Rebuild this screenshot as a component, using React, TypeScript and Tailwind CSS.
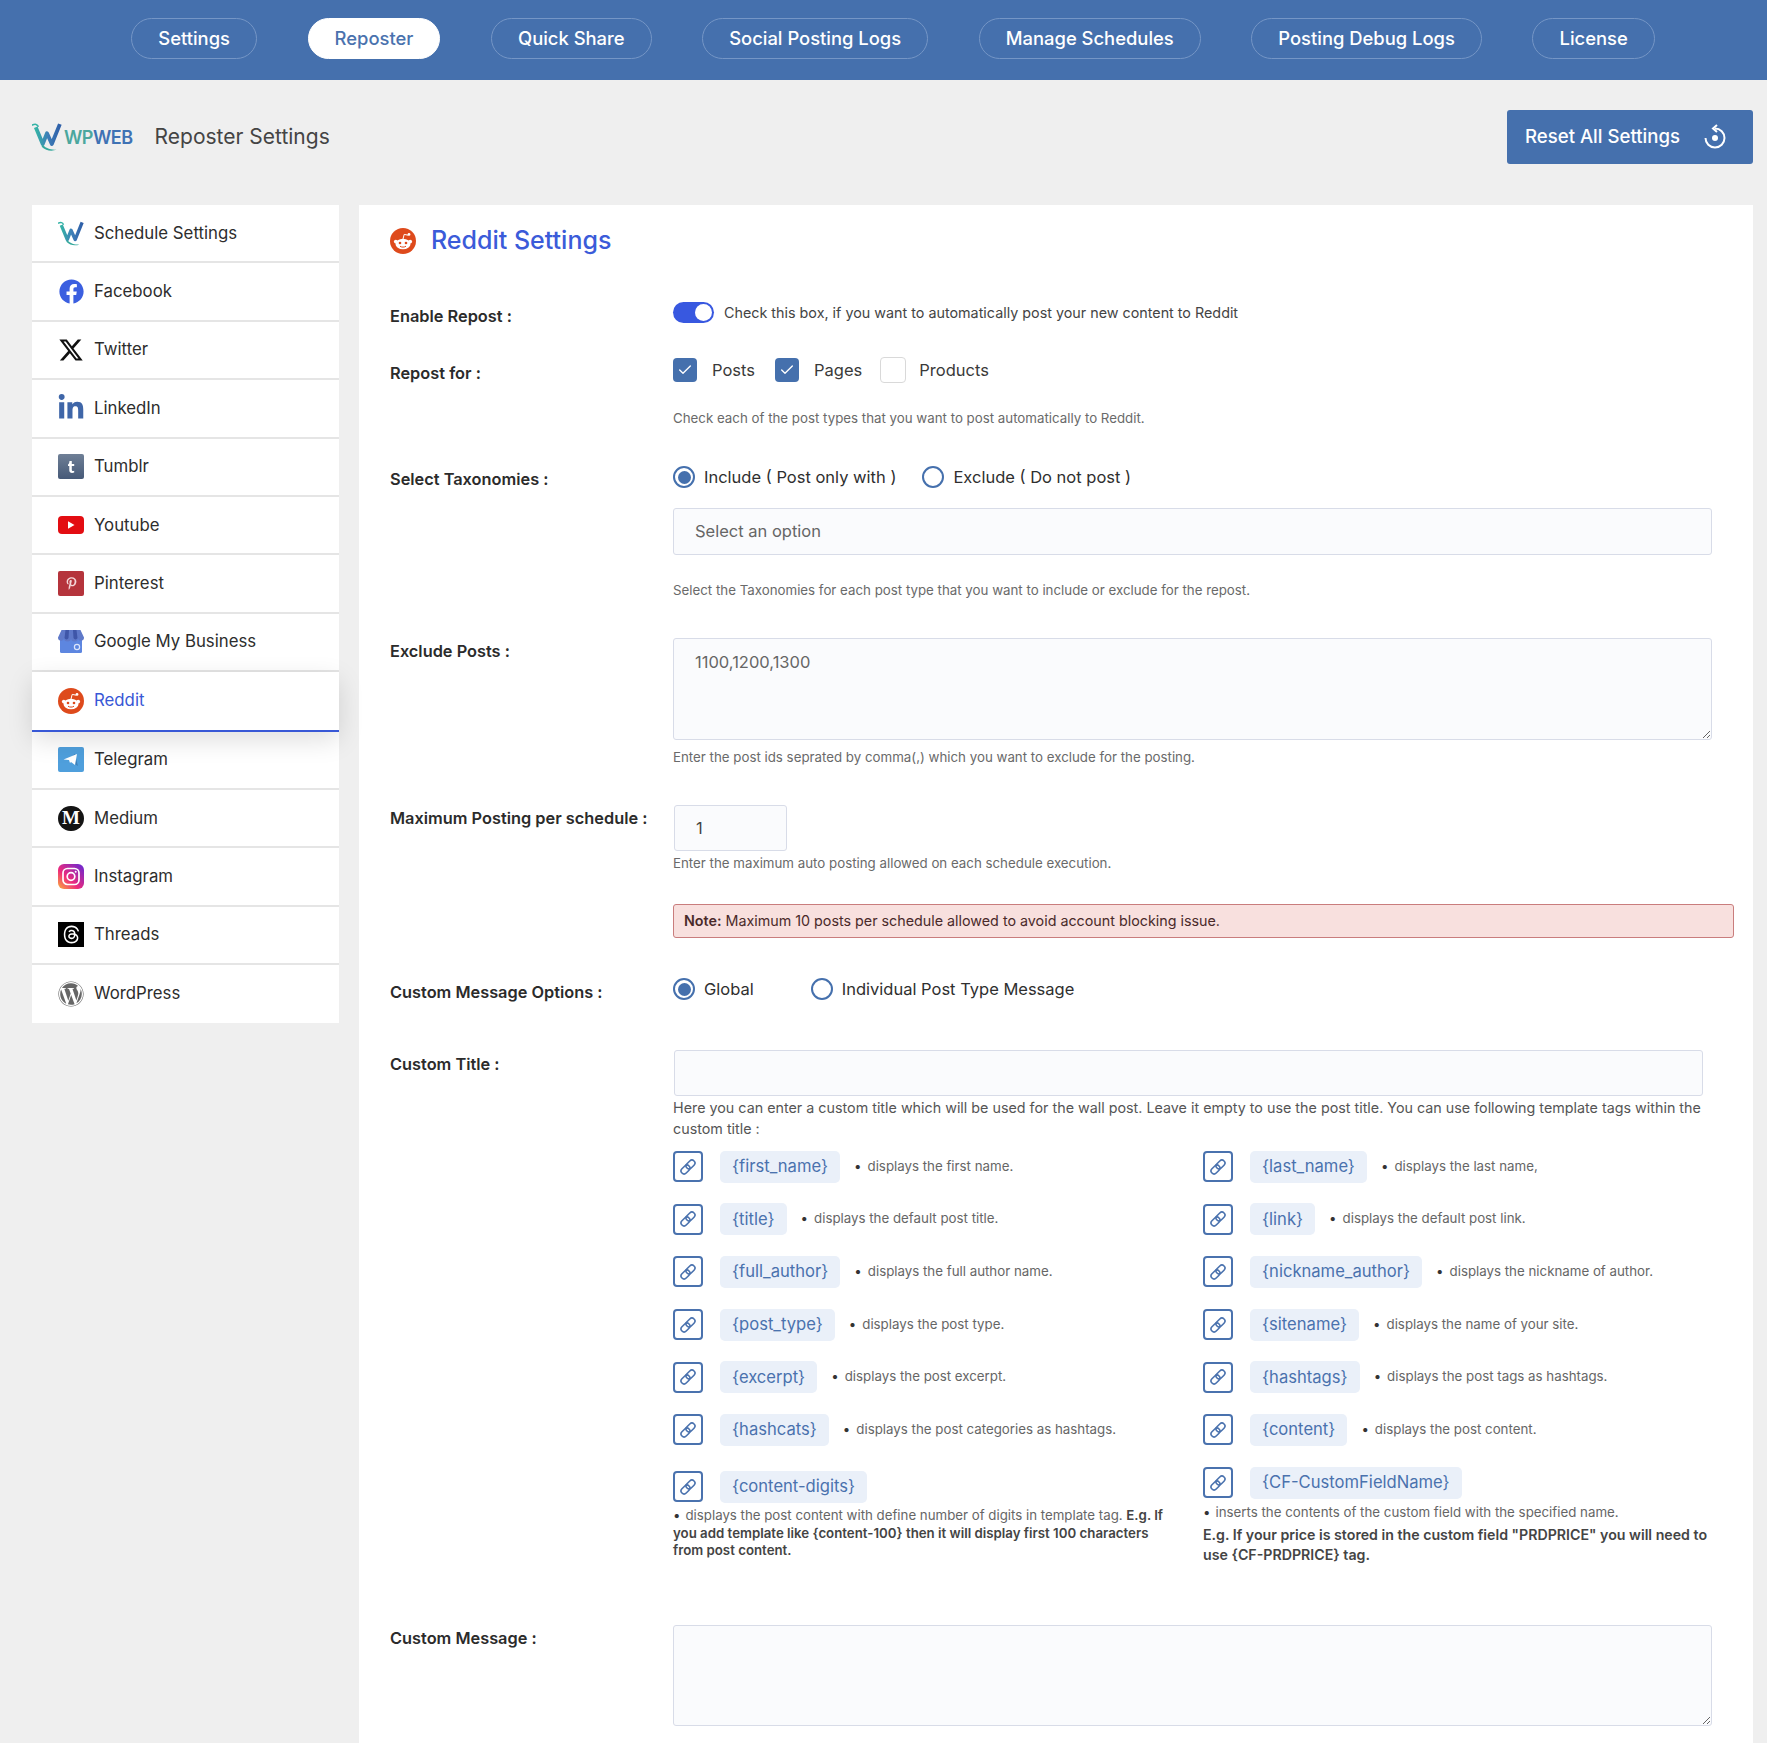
import { Check } from "lucide-react";
import type { ReactNode } from "react";
import { FaFacebook, FaLinkedinIn, FaPinterestP, FaWordpress } from "react-icons/fa";
import { FaThreads, FaXTwitter } from "react-icons/fa6";

const navItems = [
  "Settings",
  "Reposter",
  "Quick Share",
  "Social Posting Logs",
  "Manage Schedules",
  "Posting Debug Logs",
  "License",
];

function WIcon({ size = 30, id }: { size?: number; id: string }) {
  return (
    <svg width={size} height={size} viewBox="0 0 28 28" fill="none">
      <defs>
        <linearGradient id={id} x1="0" y1="0" x2="1" y2="0">
          <stop offset="0" stopColor="#35b3a6" />
          <stop offset="0.5" stopColor="#3d7fb8" />
          <stop offset="1" stopColor="#2f5fa8" />
        </linearGradient>
      </defs>
      <path d="M0 3c3-1.500 5-1 6 1.500" stroke="#35b3a6" strokeWidth="1.500" />
      <path d="M3.500 5l6.500 15.500 4-10 4.500 10L26 2" stroke={`url(#${id})`} strokeWidth="3.600" strokeLinejoin="round" />
      <path d="M10 21c3 4 8 5 13 5-5 1.500-10 1-14-3z" fill="#35a89c" />
    </svg>
  );
}

function RedditIcon({ size = 26 }: { size?: number }) {
  return (
    <svg width={size} height={size} viewBox="0 0 26 26">
      <circle cx="13" cy="13" r="13" fill="#de4a1c" />
      <ellipse cx="13" cy="16" rx="7.500" ry="5.200" fill="#fff" />
      <circle cx="5.800" cy="13.600" r="1.900" fill="#fff" />
      <circle cx="20.200" cy="13.600" r="1.900" fill="#fff" />
      <circle cx="19" cy="6.400" r="1.400" fill="#fff" />
      <path d="M13 11l1.200-4.600 4 .8" stroke="#fff" strokeWidth="1" fill="none" />
      <circle cx="10" cy="15" r="1.300" fill="#de4a1c" />
      <circle cx="16" cy="15" r="1.300" fill="#de4a1c" />
      <path d="M10 18.200c1.600 1.200 4.400 1.200 6 0" stroke="#de4a1c" strokeWidth="1" fill="none" />
    </svg>
  );
}

function TumblrIcon() {
  return (
    <svg width="26" height="25" viewBox="0 0 26 25">
      <defs>
        <linearGradient id="tumblr" x1="0" y1="0" x2="0" y2="1">
          <stop offset="0" stopColor="#6f7f96" />
          <stop offset="1" stopColor="#465a78" />
        </linearGradient>
      </defs>
      <rect width="26" height="25" rx="2" fill="url(#tumblr)" />
      <path d="M11.500 7h2.300v3h2.400v2h-2.400v4c0 1 .8 1.200 2.400.8v1.800c-3 1-4.900 0-4.900-2.300V12H10v-1.600c1-.3 1.300-1.500 1.500-3.400z" fill="#fff" />
    </svg>
  );
}

function YoutubeIcon() {
  return (
    <svg width="26" height="18" viewBox="0 0 26 18">
      <rect width="26" height="18" rx="4" fill="#e30d12" />
      <path d="M10 5.200l6.500 3.800-6.500 3.800z" fill="#fff" />
    </svg>
  );
}

function BusinessIcon() {
  return (
    <svg width="26" height="23" viewBox="0 0 26 23">
      <rect x="2" y="7" width="22" height="16" rx="1.500" fill="#5d86e0" />
      <path d="M3.500 0h19L26 7.500a3 3 0 0 1-6 .5 3.500 3.500 0 0 1-7 0 3.500 3.500 0 0 1-7 0 3 3 0 0 1-6-.5z" fill="#5f79c9" />
      <path d="M7.500 0H11l-.5 8a2.100 2.100 0 0 1-4 0zM15 0h3.500l1 8a2.100 2.100 0 0 1-4 0z" fill="#3f56a8" />
      <circle cx="19" cy="17" r="2.600" fill="none" stroke="#dbe5fb" strokeWidth="1.200" />
    </svg>
  );
}

function TelegramIcon() {
  return (
    <svg width="26" height="25" viewBox="0 0 26 25">
      <rect width="26" height="25" rx="2" fill="#4f9fdc" />
      <path d="M12 14l4.500-7.500L20 19l-8-5z" fill="#3f7fb7" />
      <path d="M5.500 12.500l13.500-5.500-2 11-4-3-1 1-1-3z" fill="#fff" />
    </svg>
  );
}

function InstagramIcon() {
  return (
    <svg width="26" height="25" viewBox="0 0 26 25" fill="none">
      <defs>
        <linearGradient id="insta" x1="0" y1="1" x2="1" y2="0">
          <stop offset="0" stopColor="#fbb03b" />
          <stop offset="0.4" stopColor="#ee2a7b" />
          <stop offset="1" stopColor="#6228d7" />
        </linearGradient>
      </defs>
      <rect width="26" height="25" rx="6" fill="url(#insta)" />
      <rect x="5" y="4.500" width="16" height="16" rx="4.500" stroke="#fff" strokeWidth="1.700" />
      <circle cx="13" cy="12.500" r="3.800" stroke="#fff" strokeWidth="1.700" />
      <circle cx="17.700" cy="7.700" r="1" fill="#fff" />
    </svg>
  );
}

function ChainIcon() {
  return (
    <svg width="18" height="18" viewBox="0 0 18 18" fill="none" stroke="#4a72ae" strokeWidth="1.600">
      <rect x="1.500" y="8.500" width="10" height="6" rx="3" transform="rotate(-45 6.500 11.500)" />
      <rect x="6.500" y="3.500" width="10" height="6" rx="3" transform="rotate(-45 11.500 6.500)" />
    </svg>
  );
}

const sidebarItems: { label: string; icon: ReactNode; active?: boolean }[] = [
  { label: "Schedule Settings", icon: <WIcon size={27} id="w-side" /> },
  { label: "Facebook", icon: <FaFacebook size={25} color="#3b5fe0" /> },
  { label: "Twitter", icon: <FaXTwitter size={26} color="#111" /> },
  { label: "LinkedIn", icon: <FaLinkedinIn size={28} color="#3f66a8" /> },
  { label: "Tumblr", icon: <TumblrIcon /> },
  { label: "Youtube", icon: <YoutubeIcon /> },
  {
    label: "Pinterest",
    icon: (
      <span className="flex h-[25px] w-[26px] items-center justify-center rounded-[2px] bg-[#b5343c]">
        <FaPinterestP size={13} color="#f3d6d8" />
      </span>
    ),
  },
  { label: "Google My Business", icon: <BusinessIcon /> },
  { label: "Reddit", icon: <RedditIcon />, active: true },
  { label: "Telegram", icon: <TelegramIcon /> },
  {
    label: "Medium",
    icon: (
      <span className="flex h-[25px] w-[26px] items-center justify-center rounded-full bg-[#141414] [font-family:'Liberation_Serif',serif] text-[19px] font-bold text-white">
        M
      </span>
    ),
  },
  { label: "Instagram", icon: <InstagramIcon /> },
  {
    label: "Threads",
    icon: (
      <span className="flex h-[25px] w-[26px] items-center justify-center bg-black">
        <FaThreads size={19} color="#fff" />
      </span>
    ),
  },
  { label: "WordPress", icon: <FaWordpress size={26} color="#666" /> },
];

const tagRows: [string, string, string, string][] = [
  ["{first_name}", "displays the first name.", "{last_name}", "displays the last name,"],
  ["{title}", "displays the default post title.", "{link}", "displays the default post link."],
  ["{full_author}", "displays the full author name.", "{nickname_author}", "displays the nickname of author."],
  ["{post_type}", "displays the post type.", "{sitename}", "displays the name of your site."],
  ["{excerpt}", "displays the post excerpt.", "{hashtags}", "displays the post tags as hashtags."],
  ["{hashcats}", "displays the post categories as hashtags.", "{content}", "displays the post content."],
];

function NavPill({ label, active }: { label: string; active: boolean }) {
  return (
    <a
      className={
        active
          ? "flex h-[41px] items-center rounded-[21px] border-[1.5px] border-white bg-white px-[26px] text-[18.400px] font-medium text-[#4a72ae]"
          : "flex h-[41px] items-center rounded-[21px] border-[1.5px] border-[#7596c6] px-[26px] text-[18.400px] font-medium text-white"
      }
    >
      {label}
    </a>
  );
}

function FieldRow({
  label,
  labelTop,
  className,
  children,
}: {
  label?: string;
  labelTop?: string;
  className?: string;
  children: ReactNode;
}) {
  return (
    <div className={`flex ${className ?? ""}`}>
      <div className="w-[283px] shrink-0">
        {label && (
          <label className={`block text-[16.350px] leading-[20px] font-semibold text-[#2b2b2b] ${labelTop ?? ""}`}>
            {label}
          </label>
        )}
      </div>
      <div className="min-w-0 flex-1">{children}</div>
    </div>
  );
}

function Hint({ className, children }: { className?: string; children: ReactNode }) {
  return <p className={`text-[13.300px] leading-[20px] text-[#6a6a6a] ${className ?? ""}`}>{children}</p>;
}

function CheckBox({ checked, label }: { checked: boolean; label: string }) {
  return (
    <div className="flex items-center">
      <span
        className={
          checked
            ? "flex h-[24px] w-[24px] items-center justify-center rounded-[4px] bg-[#4570ad]"
            : "h-[26px] w-[26px] rounded-[4px] border border-[#d9d9d9] bg-white"
        }
      >
        {checked && <Check size={16} color="#fff" strokeWidth={2} />}
      </span>
      <span className={checked ? "ml-[15px] text-[16.500px] text-[#3a3a3a]" : "ml-[13px] text-[16.500px] text-[#3a3a3a]"}>
        {label}
      </span>
    </div>
  );
}

function Radio({ checked, label }: { checked: boolean; label: string }) {
  return (
    <div className="flex items-center">
      <span className="flex h-[22px] w-[22px] items-center justify-center rounded-full border-2 border-[#4570ad] bg-white">
        {checked && <span className="h-[13px] w-[13px] rounded-full bg-[#4570ad]" />}
      </span>
      <span className="ml-[9px] text-[16.500px] leading-[22px] text-[#2f2f2f]">{label}</span>
    </div>
  );
}

function TagIcon() {
  return (
    <span className="flex h-[31px] w-[30px] shrink-0 items-center justify-center rounded-[4px] border-2 border-[#4a72ae] bg-white">
      <ChainIcon />
    </span>
  );
}

function TagPill({ text }: { text: string }) {
  return (
    <span className="ml-[17px] flex h-[32px] items-center rounded-[5px] bg-[#eaf0f9] px-[12px] text-[16.600px] text-[#4a72ae]">
      {text}
    </span>
  );
}

function TagRow({ tag, desc }: { tag: string; desc: string }) {
  return (
    <div className="flex h-[31px] items-center">
      <TagIcon />
      <TagPill text={tag} />
      <span className="ml-[14px] text-[13.300px] text-[#333]">•</span>
      <span className="ml-[6px] text-[13.300px] text-[#666]">{desc}</span>
    </div>
  );
}

export default function App() {
  return (
    <div className="min-h-[1743px] bg-[#efefef] [font-family:Inter,sans-serif]">
      <nav className="flex h-20 items-center justify-center gap-[50.600px] bg-[#4570ad] pb-[3px] pl-[19px]">
        {navItems.map((item) => (
          <NavPill key={item} label={item} active={item === "Reposter"} />
        ))}
      </nav>

      <div className="flex items-center justify-between pt-[30px] pr-[14px] pl-[32px]">
        <div className="flex items-center">
          <WIcon id="w-head" />
          <span className="ml-[2px] text-[18px] font-semibold tracking-[-0.5px]">
            <span className="text-[#4ba79e]">WP</span>
            <span className="text-[#3f72b4]">WEB</span>
          </span>
          <span className="ml-[22px] text-[21px] text-[#444]">Reposter Settings</span>
        </div>
        <button className="flex h-[54px] w-[246px] items-center rounded-[3px] bg-[#4570ad] pr-[25px] pl-[18px] text-[18.600px] font-medium text-white">
          Reset All Settings
          <svg className="ml-auto" width="26" height="26" viewBox="0 0 26 26" fill="none" stroke="#fff" strokeWidth="2">
            <path d="M13 4.500a9.500 9.500 0 1 1-9.500 9.500" />
            <path d="M15 1l-4 3.500 4 3.500" />
            <circle cx="13" cy="14" r="3" fill="#fff" stroke="none" />
          </svg>
        </button>
      </div>

      <main className="mt-[41px] flex gap-[20px] pr-[14px] pl-[32px]">
        <aside className="h-[818px] w-[307px] shrink-0 bg-white">
          {sidebarItems.map((item, i) => (
            <div
              key={item.label}
              className={
                item.active
                  ? "relative z-10 flex h-[59.400px] items-center border-b-2 border-[#3858d6] bg-white pl-[26px] shadow-[0_8px_26px_rgba(0,0,0,0.13)]"
                  : i === sidebarItems.length - 1
                    ? "flex h-[58px] items-center pl-[26px]"
                    : "flex h-[58.400px] items-center border-b-2 border-[#e5e5e5] pl-[26px]"
              }
            >
              <span className="flex w-[26px] items-center justify-center">{item.icon}</span>
              <span className={item.active ? "ml-[10px] text-[16.800px] text-[#3858d6]" : "ml-[10px] text-[16.800px] text-[#2d2d2d]"}>
                {item.label}
              </span>
            </div>
          ))}
        </aside>

        <section className="w-[1394px] bg-white pt-[23px] pl-[31px]">
          <div className="flex h-[25px] items-center">
            <RedditIcon />
            <h1 className="ml-[15px] text-[25px] font-medium text-[#3b5bd9]">Reddit Settings</h1>
          </div>

          <FieldRow label="Enable Repost :" labelTop="pt-[4px]" className="mt-[49px]">
            <div className="flex h-[21px] items-center">
              <span className="flex h-[21px] w-[41px] items-center justify-end rounded-full bg-[#3858e0] pr-[2px]">
                <span className="h-[17px] w-[17px] rounded-full bg-white" />
              </span>
              <span className="ml-[10px] text-[14.340px] text-[#444]">
                Check this box, if you want to automatically post your new content to Reddit
              </span>
            </div>
          </FieldRow>

          <FieldRow label="Repost for :" labelTop="pt-[5px]" className="mt-[32px]">
            <div className="flex h-[24px] items-center">
              <CheckBox checked label="Posts" />
              <div className="ml-[20px]">
                <CheckBox checked label="Pages" />
              </div>
              <div className="ml-[18px]">
                <CheckBox checked={false} label="Products" />
              </div>
            </div>
            <Hint className="mt-[26px]">Check each of the post types that you want to post automatically to Reddit.</Hint>
          </FieldRow>

          <FieldRow label="Select Taxonomies :" labelTop="pt-[3px]" className="mt-[38px]">
            <div className="flex h-[22px] items-center gap-[26px]">
              <Radio checked label="Include ( Post only with )" />
              <Radio checked={false} label="Exclude ( Do not post )" />
            </div>
            <div className="mt-[20px] flex h-[47px] w-[1039px] items-center rounded-[3px] border border-[#d8dce8] bg-[#fafbfd] pl-[21px] text-[16.500px] text-[#666]">
              Select an option
            </div>
            <Hint className="mt-[25px]">Select the Taxonomies for each post type that you want to include or exclude for the repost.</Hint>
          </FieldRow>

          <FieldRow label="Exclude Posts :" labelTop="pt-[3px]" className="mt-[38px]">
            <textarea
              readOnly
              defaultValue="1100,1200,1300"
              className="block h-[102px] w-[1039px] rounded-[3px] border border-[#d8dce8] bg-[#fafbfd] px-[21px] pt-[11px] text-[16.500px] text-[#666]"
            />
            <Hint className="mt-[7px]">Enter the post ids seprated by comma(,) which you want to exclude for the posting.</Hint>
          </FieldRow>

          <FieldRow label="Maximum Posting per schedule :" labelTop="pt-[3px]" className="mt-[38px]">
            <input
              readOnly
              defaultValue="1"
              className="ml-[1px] block h-[46px] w-[113px] rounded-[3px] border border-[#d8dce8] bg-[#fafbfd] pl-[21px] text-[16.500px] text-[#444]"
            />
            <Hint className="mt-[2px]">Enter the maximum auto posting allowed on each schedule execution.</Hint>
            <div className="mt-[31px] flex h-[34px] w-[1061px] items-center rounded-[3px] border border-[#c97d7d] bg-[#f8e0de] pb-[1px] pl-[10px] text-[14.300px] text-[#4a2a2a]">
              <strong className="mr-[4px] font-semibold">Note:</strong>
              Maximum 10 posts per schedule allowed to avoid account blocking issue.
            </div>
          </FieldRow>

          <FieldRow label="Custom Message Options :" labelTop="pt-[4px]" className="mt-[40px]">
            <div className="flex h-[22px] items-center gap-[57px]">
              <Radio checked label="Global" />
              <Radio checked={false} label="Individual Post Type Message" />
            </div>
          </FieldRow>

          <FieldRow label="Custom Title :" labelTop="pt-[4px]" className="mt-[48px]">
            <input
              readOnly
              className="ml-[1px] block h-[46px] w-[1029px] rounded-[3px] border border-[#d8dce8] bg-[#fafbfd]"
            />
            <p className="mt-[1px] w-[1035px] text-[14.320px] leading-[21px] text-[#555]">
              Here you can enter a custom title which will be used for the wall post. Leave it empty to use the post title. You can use following template tags within the custom title :
            </p>
            <div className="mt-[12px] grid grid-cols-[530px_1fr] gap-y-[21.700px]">
              {tagRows.map(([leftTag, leftDesc, rightTag, rightDesc]) => (
                <div key={leftTag} className="contents">
                  <TagRow tag={leftTag} desc={leftDesc} />
                  <TagRow tag={rightTag} desc={rightDesc} />
                </div>
              ))}
              <div className="pt-[4px]">
                <div className="flex h-[31px] items-center">
                  <TagIcon />
                  <TagPill text="{content-digits}" />
                </div>
                <p className="mt-[5px] text-[13.280px] leading-[17.500px] text-[#666]">
                  <span className="mr-[5px] text-[#333]">•</span>
                  displays the post content with define number of digits in template tag.{" "}
                  <strong className="font-semibold text-[#444]">
                    E.g. If
                    <br />
                    you add template like {"{content-100}"} then it will display first 100 characters
                    <br />
                    from post content.
                  </strong>
                </p>
              </div>
              <div>
                <div className="flex h-[31px] items-center">
                  <TagIcon />
                  <TagPill text="{CF-CustomFieldName}" />
                </div>
                <p className="mt-[5px] text-[13.300px] leading-[18px] text-[#666]">
                  <span className="mr-[5px] text-[#333]">•</span>
                  inserts the contents of the custom field with the specified name.
                </p>
                <p className="mt-[4px] text-[14.200px] leading-[19.500px] font-semibold text-[#444]">
                  E.g. If your price is stored in the custom field "PRDPRICE" you will need to
                  <br />
                  use {"{CF-PRDPRICE}"} tag.
                </p>
              </div>
            </div>
          </FieldRow>

          <FieldRow label="Custom Message :" labelTop="pt-[3px]" className="mt-[61px] pb-[18px]">
            <textarea
              readOnly
              className="block h-[101px] w-[1039px] rounded-[3px] border border-[#d8dce8] bg-[#fafbfd]"
            />
          </FieldRow>
        </section>
      </main>
    </div>
  );
}
